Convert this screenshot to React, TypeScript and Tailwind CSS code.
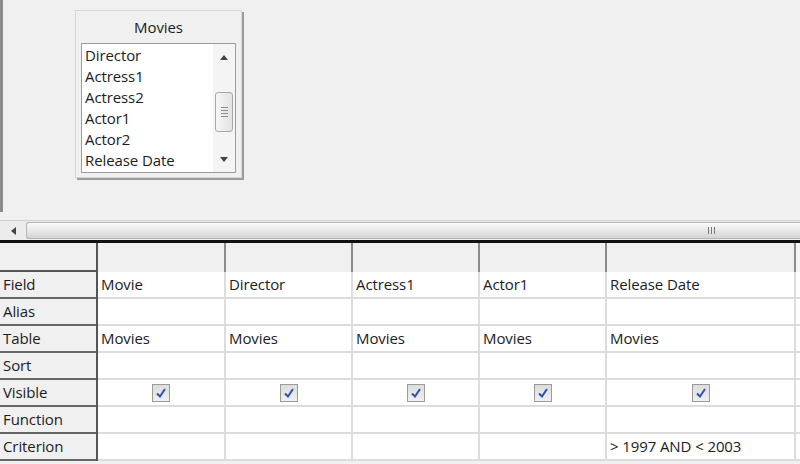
const columns = [
  { field: 'Movie', table: 'Movies', criterion: '' },
  { field: 'Director', table: 'Movies', criterion: '' },
  { field: 'Actress1', table: 'Movies', criterion: '' },
  { field: 'Actor1', table: 'Movies', criterion: '' },
  { field: 'Release Date', table: 'Movies', criterion: '> 1997 AND < 2003' },
];

const rowLabels = ['Field', 'Alias', 'Table', 'Sort', 'Visible', 'Function', 'Criterion'];

const listItems = ['Director', 'Actress1', 'Actress2', 'Actor1', 'Actor2', 'Release Date'];

const colWidths = ['w-[128px]', 'w-[127px]', 'w-[127px]', 'w-[127px]', 'w-[189px]'];

function Checkbox() {
  return (
    <div className="w-[18px] h-[18px] border border-[#9a9a9a] bg-gradient-to-b from-[#dcdcdc] to-[#f0f0f0] flex items-center justify-center">
      <svg width="12" height="12" viewBox="0 0 12 12">
        <path d="M2 6.5 L5 9.5 L10 2" fill="none" stroke="#2f4fb0" strokeWidth="2" />
      </svg>
    </div>
  );
}

function TableBox() {
  return (
    <div className="ml-[72px] mt-[10px] w-[167px] h-[168px] bg-[#f0f0f0] border border-[#d6d6d6] shadow-[2px_2px_0_#9c9c9c] flex flex-col">
      <div className="h-[32px] flex items-center justify-center text-[15px]">Movies</div>
      <div className="mx-[5px] h-[130px] bg-white border border-[#9c9c9c] flex">
        <div className="flex-1 pt-[1px]">
          {listItems.map((item) => (
            <div key={item} className="h-[21px] pl-[3px] flex items-center text-[15px] leading-none">
              {item}
            </div>
          ))}
        </div>
        <div className="w-[22px] bg-[#f4f4f4] flex flex-col items-center">
          <div className="h-[26px] flex items-center justify-center">
            <svg width="8" height="5" viewBox="0 0 8 5"><path d="M0 5 L4 0 L8 5 Z" fill="#444" /></svg>
          </div>
          <div className="mt-[22px] w-[18px] h-[40px] rounded-[3px] border border-[#a8a8a8] bg-gradient-to-r from-[#f6f6f6] to-[#e2e2e2] flex flex-col items-center justify-center gap-[2px]">
            <div className="w-[7px] h-[1px] bg-[#8a8a8a]" />
            <div className="w-[7px] h-[1px] bg-[#8a8a8a]" />
            <div className="w-[7px] h-[1px] bg-[#8a8a8a]" />
            <div className="w-[7px] h-[1px] bg-[#8a8a8a]" />
          </div>
          <div className="flex-1" />
          <div className="h-[26px] flex items-center justify-center">
            <svg width="8" height="5" viewBox="0 0 8 5"><path d="M0 0 L4 5 L8 0 Z" fill="#444" /></svg>
          </div>
        </div>
      </div>
    </div>
  );
}

function cellText(row: string, col: (typeof columns)[number]) {
  if (row === 'Field') return col.field;
  if (row === 'Table') return col.table;
  if (row === 'Criterion') return col.criterion;
  return '';
}

export default function App() {
  return (
    <div className="w-[800px] h-[464px] overflow-hidden bg-[#f0f0f0] font-['Open_Sans',sans-serif] text-[#1c1c24] tracking-[-0.1px]">
      <div className="h-[220px] flex">
        <div className="w-[3px] h-[212px] bg-[#8c8c8c]" />
        <TableBox />
      </div>

      {/* horizontal scrollbar */}
      <div className="h-[20px] border-t border-[#d0d0d0] bg-[#ececec] flex">
        <div className="w-[26px] flex items-center justify-center">
          <svg width="5" height="8" viewBox="0 0 5 8"><path d="M5 0 L0 4 L5 8 Z" fill="#444" /></svg>
        </div>
        <div className="flex-1 my-[1px] rounded-l-[3px] border border-[#b4b4b4] border-r-0 bg-gradient-to-b from-[#fafafa] via-[#e8e8e8] to-[#d4d4d4] flex items-center">
          <div className="ml-[681px] flex gap-[2px]">
            <div className="w-[1px] h-[7px] bg-[#777]" />
            <div className="w-[1px] h-[7px] bg-[#777]" />
            <div className="w-[1px] h-[7px] bg-[#777]" />
          </div>
        </div>
      </div>

      <div className="h-[3px] bg-[#111]" />

      {/* design grid */}
      <div className="flex">
        <div className="w-[98px] border-r-2 border-[#555] flex flex-col">
          <div className="h-[29px] border-b-2 border-[#555]" />
          {rowLabels.map((label) => (
            <div key={label} className="h-[27px] border-b-2 border-[#666] flex items-center pl-[3px] text-[15px]">
              {label}
            </div>
          ))}
        </div>
        {columns.map((col, i) => (
          <div key={col.field} className={`${colWidths[i]} flex flex-col`}>
            <div className="h-[29px] border-r-2 border-[#8a8a8a] bg-[#f0f0f0]" />
            {rowLabels.map((row) => (
              <div
                key={row}
                className="h-[27px] bg-white border-r-2 border-b-2 border-[#dcdcdc] flex items-center pl-[3px] text-[15px]"
              >
                {row === 'Visible' ? (
                  <div className="flex-1 flex justify-center pr-[3px]">
                    <Checkbox />
                  </div>
                ) : (
                  cellText(row, col)
                )}
              </div>
            ))}
          </div>
        ))}
        <div className="flex-1 flex flex-col">
          <div className="h-[29px] bg-[#f4f4f4]" />
          {rowLabels.map((row) => (
            <div key={row} className="h-[27px] bg-white border-b-2 border-[#dcdcdc]" />
          ))}
        </div>
      </div>
    </div>
  );
}
